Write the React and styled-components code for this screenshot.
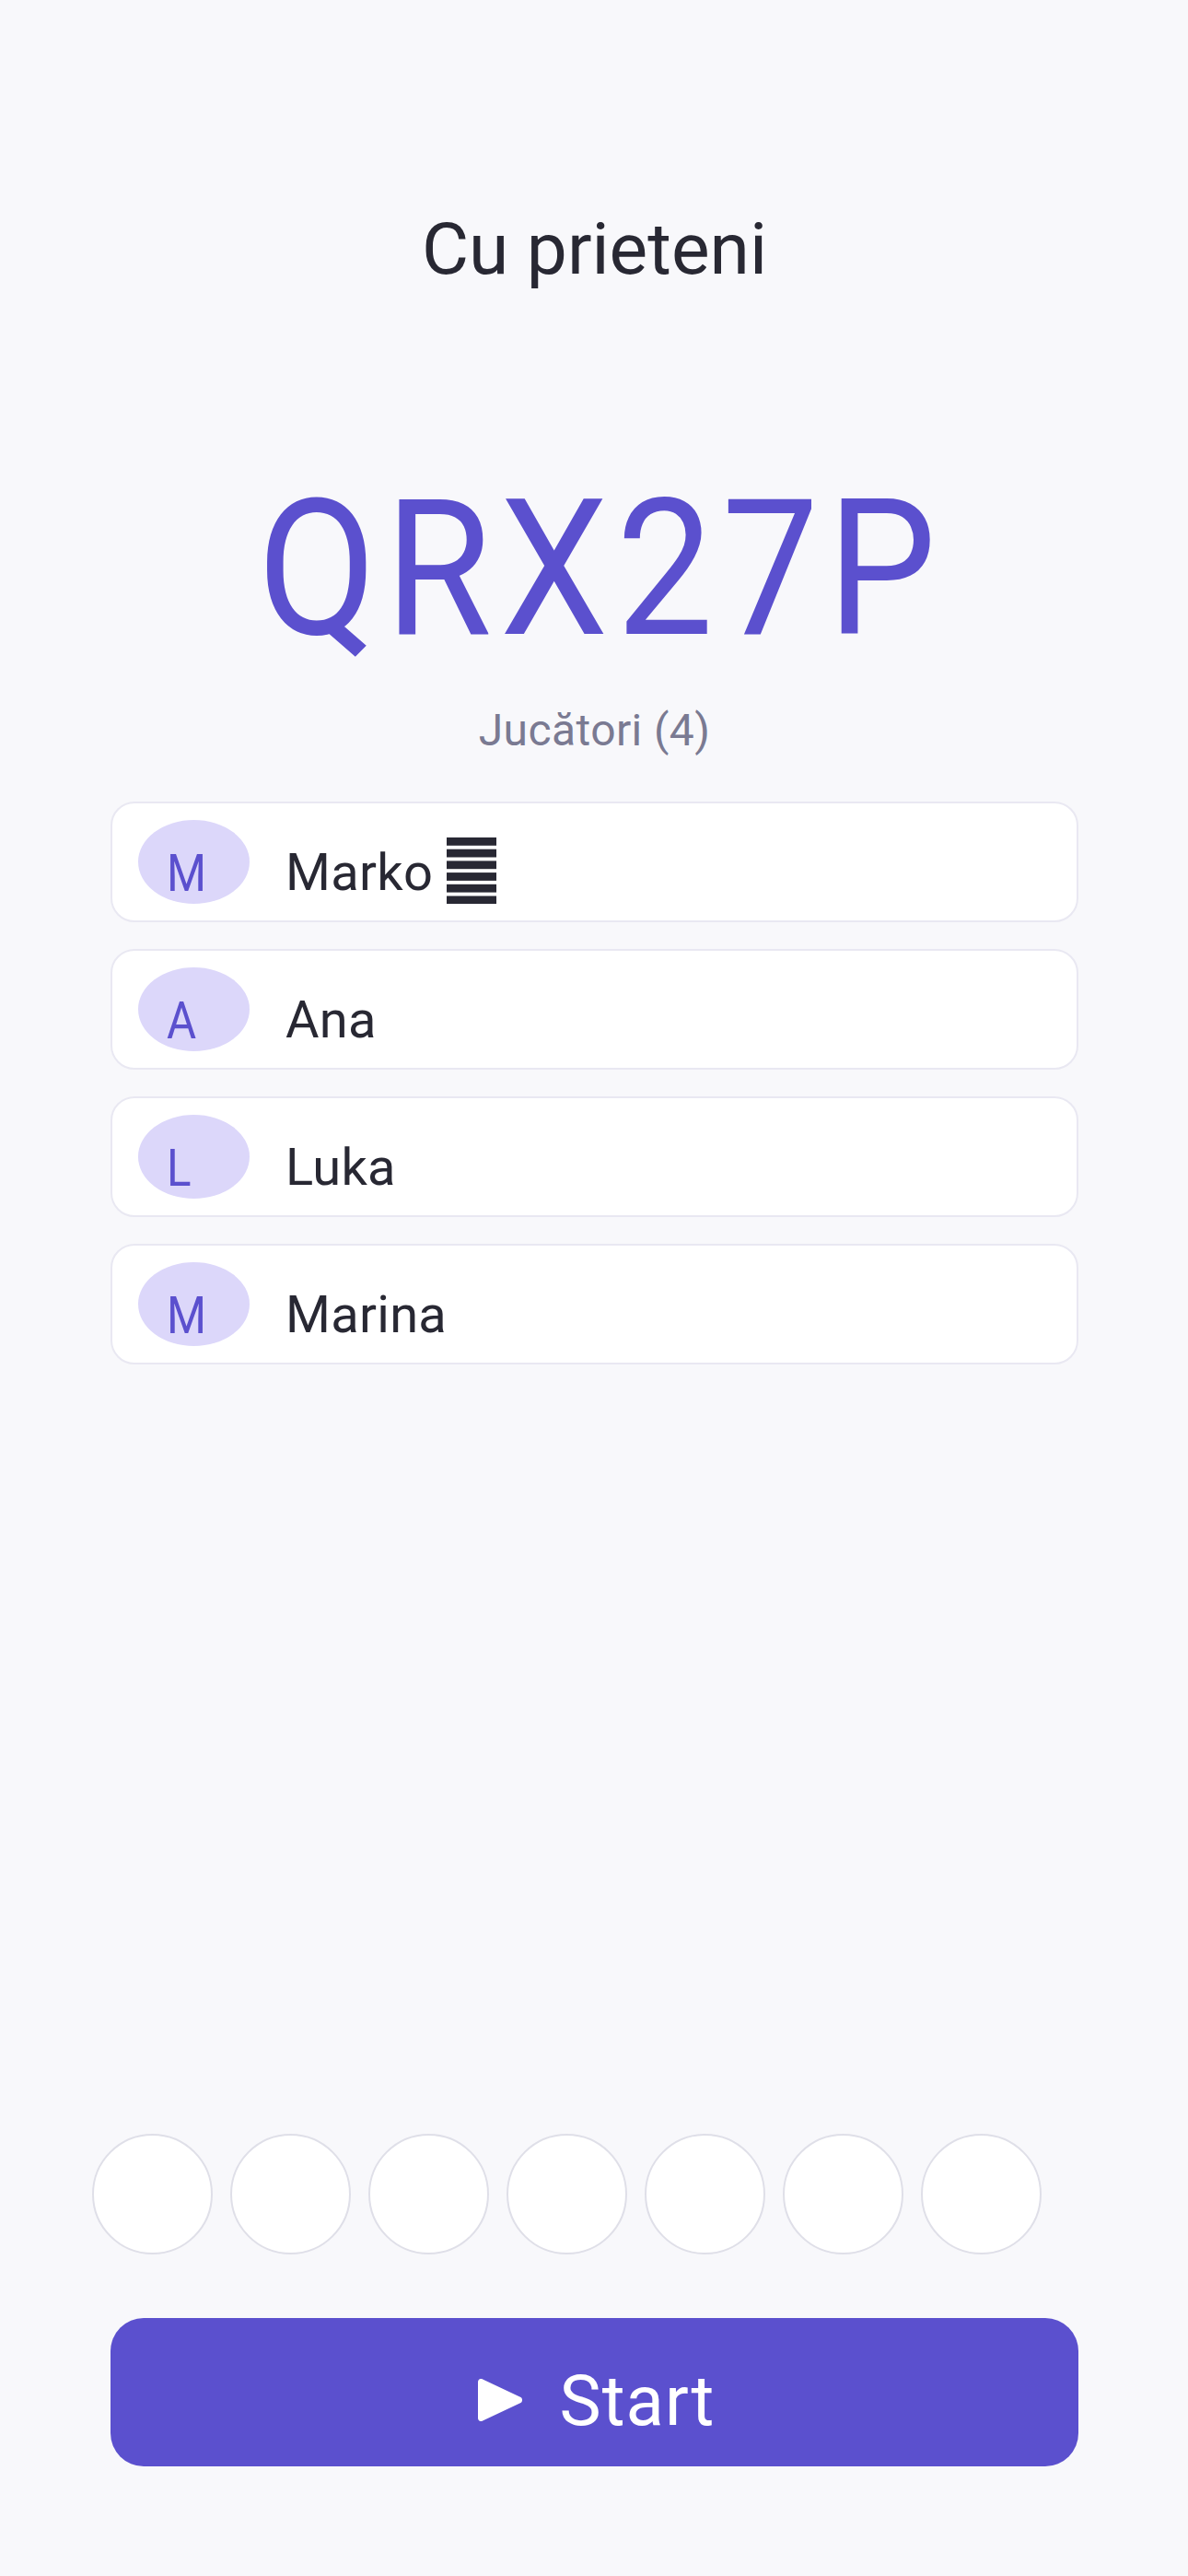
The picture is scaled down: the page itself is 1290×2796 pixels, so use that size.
import React from "react";
import styled, { createGlobalStyle } from "styled-components";

const GlobalStyle = createGlobalStyle`
  html, body {
    margin: 0;
    padding: 0;
    background: #f8f8fb;
  }
`;

const Screen = styled.div`
  box-sizing: border-box;
  width: 1290px;
  height: 2796px;
  display: flex;
  flex-direction: column;
  padding: 0 119px 0 120px;
  background: #f8f8fb;
  font-family: Roboto, "Liberation Sans", sans-serif;
  color: #282833;
`;

const Title = styled.h1`
  margin: 215px 0 0;
  height: 110px;
  font-size: 78.5px;
  line-height: 110px;
  font-weight: 400;
  text-align: center;
`;

const Code = styled.div`
  margin-top: 162px;
  height: 262px;
  padding-left: 16px;
  font-size: 206px;
  line-height: 262px;
  letter-spacing: 10px;
  color: #5b50ce;
  text-align: center;
  white-space: nowrap;
  transform: scaleX(0.91);
`;

const Subtitle = styled.div`
  margin-top: 12px;
  height: 64px;
  font-size: 48px;
  line-height: 64px;
  letter-spacing: 0.4px;
  color: #7a7a92;
  text-align: center;
`;

const PlayerList = styled.div`
  margin-top: 45px;
  display: flex;
  flex-direction: column;
  gap: 29px;
`;

const PlayerCard = styled.div`
  box-sizing: border-box;
  height: 131px;
  display: flex;
  align-items: center;
  padding-left: 28px;
  background: #fff;
  border: 2px solid #e9e8f2;
  border-radius: 26px;
`;

const Avatar = styled.div`
  box-sizing: border-box;
  width: 121px;
  height: 91px;
  margin-right: 39px;
  padding: 26px 0 0 31px;
  border-radius: 50%;
  background: #dcd7fa;
  color: #5b50ce;
  font-size: 56px;
  line-height: 64px;
`;

const Initial = styled.span`
  display: inline-block;
  transform: scaleX(0.88);
  transform-origin: left center;
`;

const Name = styled.div`
  display: flex;
  gap: 15px;
  font-size: 56px;
  line-height: 64px;
  letter-spacing: 0.3px;
  padding-top: 23px;
`;

const Bars = styled.svg`
  width: 54px;
  height: 72px;
  align-self: flex-start;
  margin: -6px 0 -8px;
  flex: none;
`;

const Spacer = styled.div`
  flex: 1;
`;

const SlotRow = styled.div`
  display: flex;
  gap: 19px;
  margin-left: -20px;
`;

const Slot = styled.div`
  box-sizing: border-box;
  width: 131px;
  height: 131px;
  flex: none;
  border-radius: 50%;
  background: #fff;
  border: 2px solid #dfdfe8;
`;

const StartButton = styled.button`
  box-sizing: border-box;
  width: 1051px;
  height: 161px;
  margin: 69px 0 119px;
  display: flex;
  align-items: center;
  justify-content: center;
  gap: 40px;
  padding: 0 0 0 4px;
  border: none;
  border-radius: 36px;
  background: #5b50ce;
  color: #fff;
  font-family: inherit;
  font-size: 76px;
  letter-spacing: 1px;
`;

const StartLabel = styled.span`
  padding-top: 18px;
`;

const PlayGlyph = styled.svg`
  width: 49px;
  height: 46px;
  margin-top: 17px;
  flex: none;
`;

const players = [
  { name: "Marko", initial: "M", host: true },
  { name: "Ana", initial: "A" },
  { name: "Luka", initial: "L" },
  { name: "Marina", initial: "M" },
];

const HostBars = () => (
  <Bars viewBox="0 0 54 72" aria-hidden="true">
    {[0, 1, 2, 3, 4, 5].map((i) => (
      <rect key={i} x="0" y={i * 12.7} width="54" height="8.8" fill="#282833" />
    ))}
  </Bars>
);

const PlayIcon = () => (
  <PlayGlyph viewBox="0 0 49 46" aria-hidden="true">
    <path
      d="M0 3.5C0 .6 2.4-.8 4.600.3L46.500 20c2 1 2 5 0 6L4.600 45.700C2.400 46.800 0 45.400 0 42.500Z"
      fill="#fff"
    />
  </PlayGlyph>
);

export default function App() {
  return (
    <Screen>
      <GlobalStyle />
      <Title>Cu prieteni</Title>
      <Code>QRX27P</Code>
      <Subtitle>Jucători (4)</Subtitle>
      <PlayerList>
        {players.map((p, i) => (
          <PlayerCard key={i}>
            <Avatar>
              <Initial>{p.initial}</Initial>
            </Avatar>
            <Name>
              {p.name}
              {p.host && <HostBars />}
            </Name>
          </PlayerCard>
        ))}
      </PlayerList>
      <Spacer />
      <SlotRow>
        {[0, 1, 2, 3, 4, 5, 6].map((i) => (
          <Slot key={i} />
        ))}
      </SlotRow>
      <StartButton>
        <PlayIcon />
        <StartLabel>Start</StartLabel>
      </StartButton>
    </Screen>
  );
}
